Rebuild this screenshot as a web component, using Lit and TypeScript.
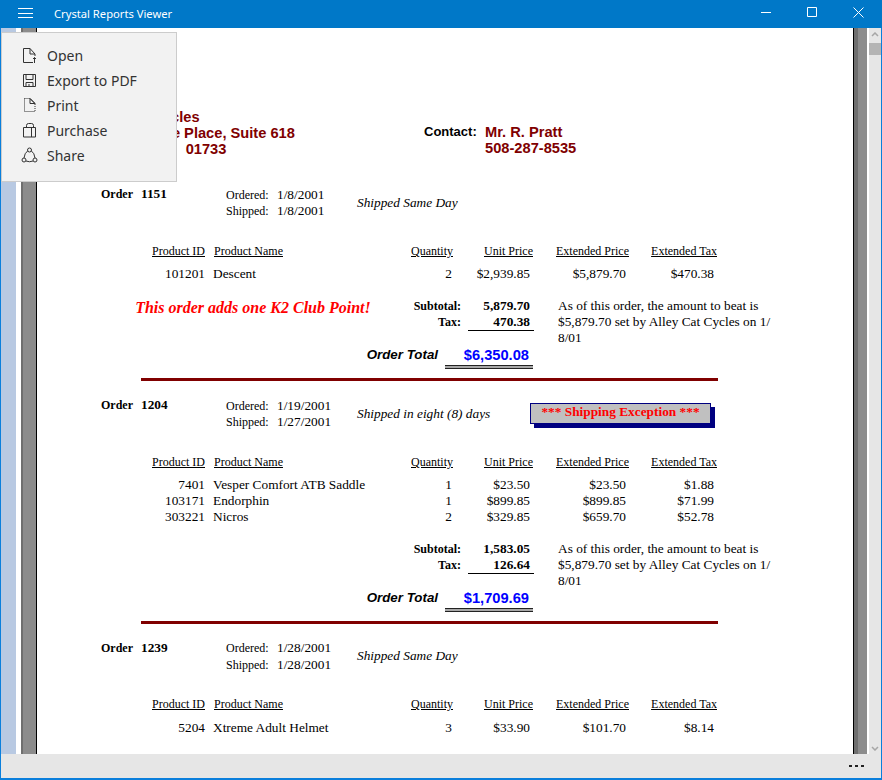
import { LitElement, html, css, svg } from 'lit'
import { customElement } from 'lit/decorators.js'

interface Line { id: string; name: string; qty: string; price: string; ext: string; tax: string }
interface Order {
  no: string
  ordered: string
  shipped: string
  note: string
  exception?: boolean
  lines: Line[]
  summary?: { message?: string; subtotal: string; tax: string; total: string }
}

const orders: Order[] = [
  {
    no: '1151', ordered: '1/8/2001', shipped: '1/8/2001', note: 'Shipped Same Day',
    lines: [{ id: '101201', name: 'Descent', qty: '2', price: '$2,939.85', ext: '$5,879.70', tax: '$470.38' }],
    summary: { message: 'This order adds one K2 Club Point!', subtotal: '5,879.70', tax: '470.38', total: '$6,350.08' }
  },
  {
    no: '1204', ordered: '1/19/2001', shipped: '1/27/2001', note: 'Shipped in eight (8) days', exception: true,
    lines: [
      { id: '7401', name: 'Vesper Comfort ATB Saddle', qty: '1', price: '$23.50', ext: '$23.50', tax: '$1.88' },
      { id: '103171', name: 'Endorphin', qty: '1', price: '$899.85', ext: '$899.85', tax: '$71.99' },
      { id: '303221', name: 'Nicros', qty: '2', price: '$329.85', ext: '$659.70', tax: '$52.78' }
    ],
    summary: { subtotal: '1,583.05', tax: '126.64', total: '$1,709.69' }
  },
  {
    no: '1239', ordered: '1/28/2001', shipped: '1/28/2001', note: 'Shipped Same Day',
    lines: [{ id: '5204', name: 'Xtreme Adult Helmet', qty: '3', price: '$33.90', ext: '$101.70', tax: '$8.14' }]
  }
]

const menuIcons = {
  open: svg`<path d="M12 15.500H2.500v-14h6.500l5 5.500v2M9 1.500v5.500h5"/><path d="M13.500 16v-5.500M12 12l1.500-1.500L15 12"/>`,
  save: svg`<path d="M2.500 2.500h12v12h-12zM5 2.500v5h7v-5M5 14.500v-4h7v4M8 12v2.500"/>`,
  print: svg`<path stroke-dasharray="1 1" d="M3.500 1.500v13h10.500v-8M3.500 1.500h5"/><path d="M9 1.500v5h5zM9 1.500l5 5"/>`,
  purchase: svg`<path d="M2.500 5.500h12v9.500h-12zM10.500 5.500v9.500M5.500 5.500v-2q0-2 2-2h3q2 0 2 2v2"/>`,
  share: svg`<circle cx="8.500" cy="3" r="2"/><circle cx="3" cy="13" r="2"/><circle cx="14" cy="13" r="2"/><path d="M6.700 3.900Q3.500 6 3 11M10.300 3.900Q13.500 6 14 11M5 14q3.500 1.500 7 0"/>`
}

const menuItems: [string, keyof typeof menuIcons][] = [
  ['Open', 'open'], ['Export to PDF', 'save'], ['Print', 'print'], ['Purchase', 'purchase'], ['Share', 'share']
]

@customElement('app-root')
export class AppRoot extends LitElement {
  static styles = css`
    :host {
      display: block;
      width: 882px;
      height: 780px;
      position: relative;
      overflow: hidden;
      background: #fff;
      font-family: "Liberation Serif", serif;
      font-size: 12px;
      color: #000;
    }
    .window { display: flex; flex-direction: column; height: 780px; border: 1px solid #0a7fdc; border-width: 0 1px 2px 1px; box-sizing: border-box; }
    .titlebar {
      flex: none; height: 28px; margin: 0 -1px; padding-right: 1px; background: #0078c8; color: #fff; display: flex; align-items: center;
      font-family: "Noto Sans", sans-serif; font-size: 11.200px;
    }
    .burger { width: 15px; height: 10px; margin: 0 0 2px 18px; border-top: 1px solid #fff; border-bottom: 1px solid #fff; box-sizing: border-box; position: relative; }
    .burger::after { content: ""; position: absolute; left: 0; right: 0; top: 3.500px; height: 1px; background: #fff; }
    .title { margin-left: 21px; flex: 1; padding-bottom: 2px; }
    .caption { width: 46px; height: 28px; display: flex; align-items: center; justify-content: center; padding-bottom: 4px; box-sizing: border-box; }
    .caption svg { display: block; }
    .body { flex: 1; min-height: 0; display: flex; }
    .strip { flex: none; width: 15px; background: #b8c9e2; }
    .strip-gap { flex: none; width: 5px; background: #fff; }
    .shadow-left { flex: none; width: 15px; background: linear-gradient(90deg, #6f6f6f 0 2px, #8c8c8c 2px); }
    .page { flex: none; border-left: 1px solid #000; border-right: 1px solid #000; overflow: hidden; box-sizing: border-box; width: 818px; background: #fff; }
    .shadow-right { flex: none; width: 13px; background: linear-gradient(90deg, #6f6f6f 0 4px, #8c8c8c 4px); }
    .right-gap { flex: none; width: 2px; background: #fff; }
    .scroll { flex: none; width: 12px; background: #e6e6e6; display: flex; flex-direction: column; align-items: center; }
    .scroll svg { display: block; flex: none; }
    .scroll .up { margin-top: 4px; }
    .thumb { flex: none; width: 12px; height: 12px; margin-top: 6px; background: #b4b4b4; }
    .scroll .down { margin-top: auto; margin-bottom: 3px; }
    .statusbar { flex: none; height: 24px; background: #e6e6e6; display: flex; justify-content: flex-end; align-items: center; gap: 3px; padding-right: 17px; }
    .statusbar i { width: 3px; height: 2px; background: #222; }

    .report { padding-left: 64px; width: 754px; box-sizing: border-box; }
    .head { display: grid; grid-template-columns: 320px 1fr; margin-top: 81px; font: bold 14.670px/16px "Liberation Sans", sans-serif; color: #800000; height: 48px; }
    .company { white-space: nowrap; }
    .contact { display: flex; margin-top: 15px; margin-left: 3px; }
    .contact b { color: #000; font-size: 13px; width: 61px; }
    .order { padding-bottom: 16px; }
    .order:first-of-type { margin-top: 29px; }
    .order-head { display: grid; grid-template-columns: 125px 131px 173px 181px; height: 33px; line-height: 16px; }
    .order-no { font-weight: 700; display: flex; gap: 8px; }
    .order-no .no { font-size: 13.330px; }
    .dates { display: grid; grid-template-columns: 51px auto; padding-top: 1px; }
    .dates .date { font-size: 13.330px; }
    .ship-note { font-size: 13.330px; font-style: italic; padding-top: 9px; }
    .exception {
      height: 21px; box-sizing: border-box; margin-top: 6px; border: 1px solid #000080; background: #c0c0c0; box-shadow: 4px 4px 0 #000080;
      color: #f00; font-size: 13.330px; font-weight: 700; text-align: center; line-height: 16px;
    }
    .lines { margin: 24px 0 0 40px; display: grid; grid-template-columns: 64px 199px 49px 80px 96px 88px; line-height: 16px; }
    .lines .hd { text-decoration: underline; margin-bottom: 7px; white-space: nowrap; }
    .order:last-of-type .dates { padding-top: 0; }
    .order:last-of-type .ship-note { padding-top: 8px; }
    .order:last-of-type .lines { margin-top: 23px; }
    .order:last-of-type .lines .hd { margin-bottom: 8px; }
    .num { text-align: right; }
    .hd.name { padding-left: 9px; }
    .cell { font-size: 13.330px; }
    .cell.name { padding-left: 8px; white-space: nowrap; }
    .cell.num { padding-right: 3px; }
    .cell.num.id { padding-right: 0; }
    .cell.num.qty { padding-right: 1px; }
    .summary { margin-top: 16px; display: grid; grid-template-columns: 304px 56px 73px 1fr; grid-template-rows: 16px 16px 16px; line-height: 16px; }
    .message { grid-row: 1 / span 2; color: #f00; font: italic bold 16px/20px "Liberation Serif", serif; text-align: center; white-space: nowrap; }
    .label { font-weight: 700; text-align: right; }
    .value { font-size: 13.330px; font-weight: 700; text-align: right; padding-right: 4px; }
    .value.tax { height: 16px; border-bottom: 1px solid #000; margin-left: 7px; }
    .best { grid-column: 4; grid-row: 1 / span 3; padding-left: 24px; white-space: nowrap; font-size: 13.330px; }
    .total { display: grid; grid-template-columns: 337px 95px; height: 32px; box-sizing: border-box; padding-top: 1px; }
    .total-label { font: italic bold 13.330px/16px "Liberation Sans", sans-serif; text-align: right; }
    .total-value { margin-left: 7px; font: bold 14.670px/16px "Liberation Sans", sans-serif; color: #00f; text-align: right; padding-right: 4px; }
    .double { height: 2px; margin-top: 2px; margin-right: -4px; border-top: 1px solid #222; border-bottom: 1px solid #222; background: #a8a8a8; }
    .rule { height: 3px; margin-left: 40px; width: 577px; background: #800000; }

    .menu {
      position: absolute; left: 1px; top: 32px; width: 176px; height: 150px; box-sizing: border-box; background: #f2f2f2; border: 1px solid #ccc;
      padding-top: 10px; font: 14px/25px "Noto Sans", sans-serif; color: #333;
    }
    .item { display: flex; align-items: center; height: 25px; padding-left: 19px; gap: 4px; }
    .item svg { flex: none; display: block; fill: none; stroke: #333; stroke-width: 1; }
  `

  renderOrder (o: Order) {
    return html`
      <section class="order">
        <div class="order-head">
          <div class="order-no"><span>Order</span><span class="no">${o.no}</span></div>
          <div class="dates"><span>Ordered:</span><span class="date">${o.ordered}</span><span>Shipped:</span><span class="date">${o.shipped}</span></div>
          <div class="ship-note">${o.note}</div>
          ${o.exception ? html`<div class="exception">*** Shipping Exception ***</div>` : ''}
        </div>
        <div class="lines">
          <div class="hd num">Product ID</div><div class="hd name">Product Name</div><div class="hd num">Quantity</div>
          <div class="hd num">Unit Price</div><div class="hd num">Extended Price</div><div class="hd num">Extended Tax</div>
          ${o.lines.map(l => html`
            <div class="cell num id">${l.id}</div><div class="cell name">${l.name}</div><div class="cell num qty">${l.qty}</div>
            <div class="cell num">${l.price}</div><div class="cell num">${l.ext}</div><div class="cell num">${l.tax}</div>
          `)}
        </div>
        ${o.summary ? html`
          <div class="summary">
            <div class="message">${o.summary.message ?? ''}</div>
            <div class="label" style="grid-column:2;grid-row:1">Subtotal:</div>
            <div class="value" style="grid-column:3;grid-row:1">${o.summary.subtotal}</div>
            <div class="label" style="grid-column:2;grid-row:2">Tax:</div>
            <div class="value tax" style="grid-column:3;grid-row:2">${o.summary.tax}</div>
            <div class="best">As of this order, the amount to beat is<br>$5,879.70 set by Alley Cat Cycles on 1/<br>8/01</div>
          </div>
          <div class="total">
            <div class="total-label">Order Total</div>
            <div class="total-value">${o.summary.total}<div class="double"></div></div>
          </div>
          <div class="rule"></div>
        ` : ''}
      </section>
    `
  }

  render () {
    return html`
      <div class="window">
        <div class="titlebar">
          <div class="burger"></div>
          <div class="title">Crystal Reports Viewer</div>
          <div class="caption"><svg width="11" height="11" viewBox="0 0 11 11"><path d="M0 5.500h10" stroke="#fff"/></svg></div>
          <div class="caption"><svg width="11" height="11" viewBox="0 0 11 11"><path d="M.5.500h9v9h-9z" fill="none" stroke="#fff"/></svg></div>
          <div class="caption"><svg width="11" height="11" viewBox="0 0 11 11"><path d="M.5.500l10 10M10.500.500l-10 10" stroke="#fff"/></svg></div>
        </div>
        <div class="body">
          <div class="strip"></div>
          <div class="strip-gap"></div>
          <div class="shadow-left"></div>
          <div class="page">
            <div class="report">
              <div class="head">
                <div class="company">Pedals Cycles<br>1200 Grove Place, Suite 618<br>Hopkinton&nbsp;&nbsp;&nbsp;01733</div>
                <div class="contact"><b>Contact:</b><span>Mr. R. Pratt<br>508-287-8535</span></div>
              </div>
              ${orders.map(o => this.renderOrder(o))}
            </div>
          </div>
          <div class="shadow-right"></div>
          <div class="right-gap"></div>
          <div class="scroll">
            <svg class="up" width="8" height="5" viewBox="0 0 8 5"><path d="M1 4l3-3 3 3" fill="none" stroke="#a6a6a6" stroke-width="1.500"/></svg>
            <div class="thumb"></div>
            <svg class="down" width="8" height="5" viewBox="0 0 8 5"><path d="M1 1l3 3 3-3" fill="none" stroke="#a6a6a6" stroke-width="1.500"/></svg>
          </div>
        </div>
        <div class="statusbar"><i></i><i></i><i></i></div>
      </div>
      <div class="menu">
        ${menuItems.map(([label, icon]) => html`
          <div class="item"><svg width="22" height="18" viewBox="0 0 22 18">${menuIcons[icon]}</svg><span>${label}</span></div>
        `)}
      </div>
    `
  }
}
